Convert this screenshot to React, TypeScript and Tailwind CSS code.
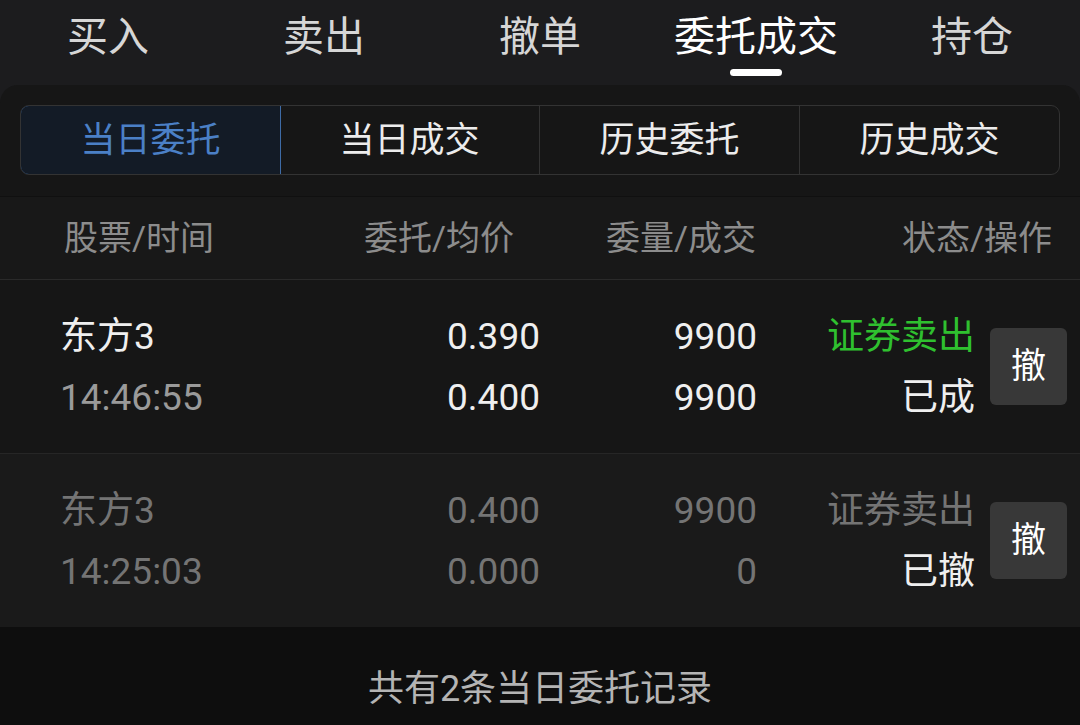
import React from "react";

const font = { fontFamily: "Roboto, 'Noto Sans CJK SC', sans-serif" };

const tabs = ["买入", "卖出", "撤单", "委托成交", "持仓"];
const segs = ["当日委托", "当日成交", "历史委托", "历史成交"];

type Row = {
  name: string;
  time: string;
  p1: string;
  p2: string;
  q1: string;
  q2: string;
  type: string;
  status: string;
  dim: boolean;
};

const rows: Row[] = [
  { name: "东方3", time: "14:46:55", p1: "0.390", p2: "0.400", q1: "9900", q2: "9900", type: "证券卖出", status: "已成", dim: false },
  { name: "东方3", time: "14:25:03", p1: "0.400", p2: "0.000", q1: "9900", q2: "0", type: "证券卖出", status: "已撤", dim: true },
];

export default function App() {
  return (
    <div className="w-[1080px] h-[725px] bg-[#1c1c1e] flex flex-col overflow-hidden" style={font}>
      {/* Top tabs */}
      <div className="h-[85px] flex shrink-0">
        {tabs.map((t, i) => (
          <div key={t} className="flex-1 flex flex-col items-center">
            <div className={`h-[72px] flex items-center text-[41px] leading-none pt-[2px] ${i === 3 ? "text-white" : "text-[#d6d6d6]"}`}>
              {t}
            </div>
            {i === 3 && <div className="w-[52px] h-[7px] rounded-full bg-white -mt-[3px]" />}
          </div>
        ))}
      </div>

      {/* Panel */}
      <div className="flex-1 flex flex-col bg-[#161616] rounded-t-[18px] overflow-hidden">
        <div className="pt-[20px] pb-[21px] px-[20px] border-b border-[#101010]">
          <div className="flex h-[70px] rounded-[9px] border border-[#333] overflow-hidden">
            {segs.map((s, i) => (
              <div
                key={s}
                className={`flex-1 flex items-center justify-center text-[35px] leading-none ${
                  i === 0
                    ? "bg-[#131b26] text-[#4b80c6] border border-[#3e6ba6] rounded-l-[9px] -m-px"
                    : "text-[#ececec]"
                } ${i > 1 ? "border-l border-[#333]" : ""}`}
              >
                {s}
              </div>
            ))}
          </div>
        </div>

        {/* Header */}
        <div className="h-[83px] shrink-0 flex items-center bg-[#181818] border-b border-[#2a2a2a] text-[34px] text-[#8c8c8c] leading-none pl-[64px]">
          <div className="w-[236px]">股票/时间</div>
          <div className="w-[214px] text-right">委托/均价</div>
          <div className="w-[242px] text-right">委量/成交</div>
          <div className="w-[296px] text-right">状态/操作</div>
        </div>

        {rows.map((r, idx) => (
          <div
            key={idx}
            className={`shrink-0 flex items-center pl-[60px] ${
              idx === 0 ? "h-[174px] bg-[#161616] border-b border-[#262626]" : "h-[173px] bg-[#1a1a1a]"
            } text-[37px] leading-none`}
          >
            <div className="w-[240px] flex flex-col">
              <div className={`h-[61px] flex items-center ${r.dim ? "text-[#747474]" : "text-[#efefef]"}`}>{r.name}</div>
              <div className={`h-[61px] flex items-center ${r.dim ? "text-[#747474]" : "text-[#9a9a9a]"}`}>{r.time}</div>
            </div>
            <div className={`w-[240px] flex flex-col items-end ${r.dim ? "text-[#747474]" : "text-[#efefef]"}`}>
              <div className="h-[61px] flex items-center">{r.p1}</div>
              <div className="h-[61px] flex items-center">{r.p2}</div>
            </div>
            <div className={`w-[217px] flex flex-col items-end ${r.dim ? "text-[#747474]" : "text-[#efefef]"}`}>
              <div className="h-[61px] flex items-center">{r.q1}</div>
              <div className="h-[61px] flex items-center">{r.q2}</div>
            </div>
            <div className="w-[218px] flex flex-col items-end">
              <div className={`h-[61px] flex items-center ${r.dim ? "text-[#747474]" : "text-[#2fc02f]"}`}>{r.type}</div>
              <div className="h-[61px] flex items-center text-[#efefef]">{r.status}</div>
            </div>
            <div className="ml-[15px] w-[77px] h-[77px] rounded-[6px] bg-[#383838] flex items-center justify-center text-[35px] text-white">
              撤
            </div>
          </div>
        ))}

        {/* Footer */}
        <div className="flex-1 bg-[#0e0e0e] flex items-center justify-center text-[36px] text-[#b4b4b4] leading-none pt-[26px]">
          共有2条当日委托记录
        </div>
      </div>
    </div>
  );
}
